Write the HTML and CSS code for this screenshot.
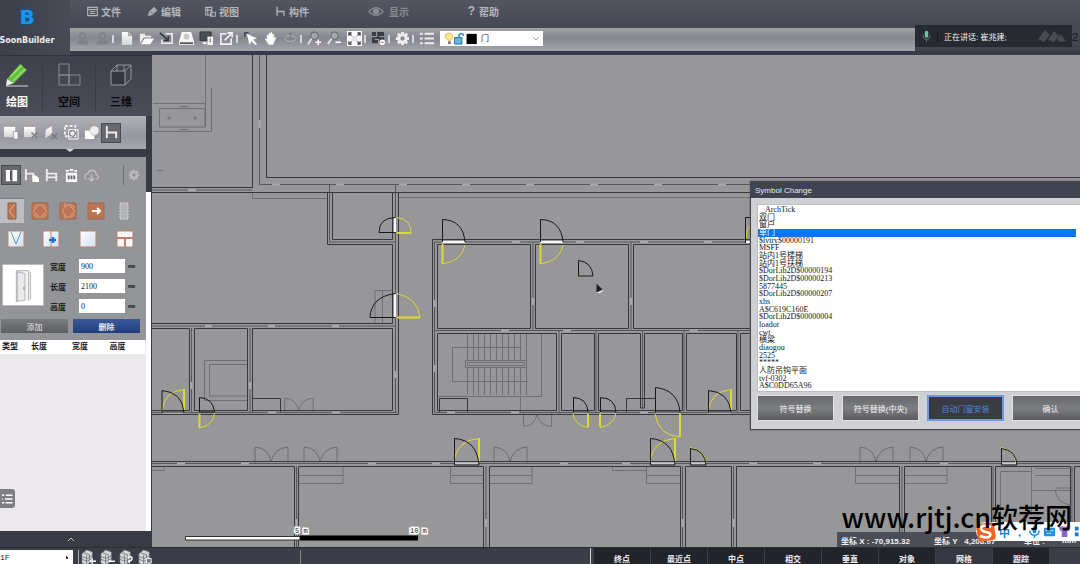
FILE: index.html
```html
<!DOCTYPE html>
<html lang="zh-CN">
<head>
<meta charset="utf-8">
<title>SoonBuilder</title>
<link rel="stylesheet" href="styles.css">
</head>
<body>
<svg class="defs" aria-hidden="true">
  <defs>
    <linearGradient id="metal" x1="0" y1="0" x2="0" y2="1"><stop offset="0" stop-color="#fff"/><stop offset="1" stop-color="#d2d3d7"/></linearGradient>
    <linearGradient id="glass" x1="0" y1="0" x2="1" y2="1"><stop offset="0" stop-color="#fff"/><stop offset="1" stop-color="#cfe0f2"/></linearGradient>
    <symbol id="layers" viewBox="0 0 16 16"><path d="M1 4l5-4 6 2v10l-6 4-5-2z" fill="#d6d7da" stroke="#77797f" stroke-width=".6"/><path d="M1 7l6 2 5-3M1 10l6 2 5-3M6 5v10M3 3l6 2v9" fill="none" stroke="#6a6c73" stroke-width=".8"/></symbol>
    <symbol id="gear" viewBox="0 0 16 16"><path d="M8 1v14M1 8h14M3 3l10 10M13 3L3 13" stroke="currentColor" stroke-width="3"/><circle cx="8" cy="8" r="4" fill="none" stroke="currentColor" stroke-width="3"/><circle cx="8" cy="8" r="2.3" fill="#8c8d93"/></symbol>
    <symbol id="chair" viewBox="0 0 16 16"><path d="M3 1v13M3 8h10v6" fill="none" stroke="currentColor" stroke-width="2"/></symbol>
    <symbol id="double-door" viewBox="0 0 35 17"><path d="M1 17V1Q15 2 17 16Q20 2 34 1V17" fill="none" stroke="#6c6c70"/></symbol>
  </defs>
</svg>
<header class="header">
  <div class="brand"><span class="brand-mark">B</span><span class="brand-name">SoonBuilder</span></div>
  <div class="header-main">
    <nav class="menu">
      <button><svg viewBox="0 0 16 16"><path d="M1 2h14v12H1zM1 5h14M4 8h8M4 11h8" fill="none" stroke="currentColor" stroke-width="1.6"/></svg>文件</button>
      <button><svg viewBox="0 0 16 16"><path d="M1 15l2-7 7-7 5 5-7 7z" fill="#a6a9b0"/><path d="M5 8l4 4" stroke="#50535d"/></svg>编辑</button>
      <button><svg viewBox="0 0 16 16"><path d="M1 2h9v11H1zM4 2v11M1 6h9M8 9h7v6H8z" fill="none" stroke="currentColor" stroke-width="1.5"/></svg>视图</button>
      <button><svg viewBox="0 0 16 16"><use href="#chair"/></svg>构件</button>
      <button class="dim"><svg class="eye" viewBox="0 0 20 14"><path d="M1 7Q10-3 19 7Q10 17 1 7z" fill="none" stroke="currentColor" stroke-width="1.5"/><circle cx="10" cy="7" r="4" fill="currentColor"/></svg>显示</button>
      <button><span class="question">?</span>帮助</button>
    </nav>
    <div class="toolbar-row">
      <div class="toolbar">
        <button aria-label="撤销"><svg class="faded" viewBox="0 0 16 16"><circle cx="8" cy="5" r="3" fill="none" stroke="currentColor" stroke-width="2"/><path d="M2 14q0-5 6-5t6 5z" fill="currentColor"/></svg></button>
        <button aria-label="重做"><svg class="faded" viewBox="0 0 16 16"><circle cx="8" cy="5" r="3" fill="none" stroke="currentColor" stroke-width="2"/><path d="M2 14q0-5 6-5t6 5z" fill="currentColor"/></svg></button>
        <i></i>
        <button aria-label="新建"><svg viewBox="0 0 16 16"><path d="M3 1h7l4 4v10H3z" fill="url(#metal)"/><path d="M10 1v4h4" fill="#bbb" stroke="#888" stroke-width=".6"/></svg></button>
        <button aria-label="打开"><svg viewBox="0 0 16 16"><path d="M1 13V3h5l1 2h6v2H5z" fill="#ececee"/><path d="M2 14l4-6h10l-4 6z" fill="#fff"/></svg></button>
        <button aria-label="导入"><svg viewBox="0 0 16 16"><path d="M7 3h7v10H3V9" fill="none" stroke="#f0f0f2" stroke-width="1.6"/><path d="M1 2l9 8M10 5v5H5" fill="none" stroke="#33353c" stroke-width="1.6"/></svg></button>
        <button aria-label="保存"><svg viewBox="0 0 16 16"><path d="M3 1h10l3 10v4H0v-4z" fill="#f5f5f6"/><circle cx="8" cy="6" r="3" fill="#c6c7cb"/><path d="M1 12h14v2H1z" fill="#55575e"/></svg></button>
        <button aria-label="另存"><svg viewBox="0 0 16 16"><path d="M1 1h12v9H1z" fill="#4b4d54" stroke="#36383f"/><path d="M4 13h4" stroke="#fff" stroke-width="2"/><path d="M9 6h6v9H9z" fill="#f3f3f4"/><path d="M12 8v4" stroke="#555"/></svg></button>
        <button aria-label="导出"><svg viewBox="0 0 16 16"><path d="M8 3H2v11h11V8" fill="none" stroke="#f4f4f6" stroke-width="1.7"/><path d="M6 10l8-8M9 2h5v5" fill="none" stroke="#f4f4f6" stroke-width="1.7"/></svg></button>
        <i></i>
        <button aria-label="选择"><svg viewBox="0 0 16 16"><path d="M4 3l11 5-4 1 4 5-2 1-4-4-2 4z" fill="#fff"/><path d="M2 6V2h4" fill="none" stroke="#3a3c43" stroke-width="1.5"/></svg></button>
        <button aria-label="平移"><svg viewBox="0 0 16 16"><path d="M4 8V4q1-1 2 0V2q1-1 2 0V1q1-1 2 1v1q2-1 2 1v3l1-1q2 0 1 2l-3 7H6L2 9q0-2 2-1z" fill="#fbfbfb" stroke="#888a91" stroke-width=".5"/></svg></button>
        <button aria-label="旋转视图"><svg class="faded" viewBox="0 0 16 16"><ellipse cx="8" cy="8" rx="6" ry="3" fill="none" stroke="#b5b6bb"/><path d="M8 2v8M6 4l2-2 2 2" fill="none" stroke="#77797f"/></svg></button>
        <i></i>
        <button aria-label="放大"><svg viewBox="0 0 16 16"><circle cx="8" cy="5" r="4" fill="#a5a6ab" stroke="#5e6067"/><path d="M5 8l-4 6" stroke="#dedfe1" stroke-width="2"/><path d="M9 12h6M12 9v6" stroke="#fff" stroke-width="1.6"/></svg></button>
        <button aria-label="缩小"><svg viewBox="0 0 16 16"><circle cx="8" cy="5" r="4" fill="#a5a6ab" stroke="#5e6067"/><path d="M5 8l-4 6" stroke="#dedfe1" stroke-width="2"/><path d="M9 12h6" stroke="#fff" stroke-width="1.6"/></svg></button>
        <button aria-label="全屏"><svg viewBox="0 0 16 16"><path d="M0 0h16v16H0z" fill="#fafafa"/><path d="M2 5V2h3M11 2h3v3M14 11v3h-3M5 14H2v-3M2 2l3 3M14 2l-3 3M14 14l-3-3M2 14l3-3" fill="none" stroke="#3e4047" stroke-width="1.2"/><path d="M5 5h6v6H5z" fill="#e1e2e4"/></svg></button>
        <i></i>
        <button aria-label="网格"><svg viewBox="0 0 16 16"><path d="M1 1h13v12H1z" fill="#3b3d45"/><path d="M6 1v5H1M9 6h5M8 13V9H4" fill="none" stroke="#aaabb0"/><circle cx="12" cy="12" r="3" fill="#fff"/><path d="M10 12h4" stroke="#888"/></svg></button>
        <i></i>
        <button aria-label="设置"><svg class="light" viewBox="0 0 16 16"><use href="#gear"/></svg></button>
        <i></i>
        <button aria-label="列表"><svg class="light" viewBox="0 0 16 16"><path d="M1 3h3M6 3h10M1 8h3M6 8h10M1 13h3M6 13h10" stroke="currentColor" stroke-width="2.2"/></svg></button>
        <div class="layer">
          <svg viewBox="0 0 36 14" aria-hidden="true"><path d="M5 1q4 0 4 4 0 2-2 4H4Q1 7 1 5q0-4 4-4" fill="#ffe88b" stroke="#c7a54c" stroke-width=".7"/><path d="M4 10h3v3H4z" fill="#767676"/><path d="M11 6h8v7h-8z" fill="#66b7df" stroke="#236c97"/><path d="M16 6V3q3-3 5 1" fill="none" stroke="#4b94bb" stroke-width="2"/><path d="M24 2h11v11H24z" fill="#000"/></svg>
          <select aria-label="图层"><option>门</option></select>
          <svg class="chevron" viewBox="0 0 8 8" aria-hidden="true"><path d="M1 2l3 3 3-3" fill="none" stroke="#a8a9ac"/></svg>
        </div>
      </div>
      <div class="speaker">
        <svg class="mic" viewBox="0 0 10 14"><rect x="3" y="1" width="4" height="8" rx="2" fill="#67c99b"/><path d="M1 6q0 5 4 5t4-5M5 11v3" fill="none" stroke="#5d7f77"/></svg>
        <span>正在讲话: 崔兆建;</span>
        <svg class="peaks" viewBox="0 0 30 14"><path d="M1 10L8 1l5 5-6 7zM11 11l6-9 5 5-5 6zM20 11l3-6 6 7-5 1z" fill="#484b52"/></svg>
      </div>
      <span class="clock">2</span>
    </div>
  </div>
</header>
<main class="workspace">
  <aside class="sidebar">
    <div class="modes">
      <button class="current"><svg viewBox="0 0 24 24"><path d="M1 23h22" stroke="#d5d6d9"/><path d="M2 16L15 1l7 6L9 20z" fill="#62c23c"/><path d="M5 14L17 2M8 18L20 6" stroke="#a1e07c" stroke-width="1.3"/><path d="M2 16l7 4-8 3z" fill="#ecefe8"/></svg>绘图</button>
      <button><svg viewBox="0 0 24 24"><path d="M2 1h10v11H2zM2 12h10v10H2zM12 12h11v10H12z" fill="none" stroke="#888a91"/></svg>空间</button>
      <button><svg viewBox="0 0 24 24"><path d="M2 8h14v14H2zM2 8l6-6h14l-6 6M22 2v14l-6 6M8 2v6M15 2v6" fill="none" stroke="#93959b"/><path d="M3 9h12v12H3z" fill="#34363f"/></svg>三维</button>
    </div>
    <div class="subtools">
      <button aria-label="墙"><svg viewBox="0 0 16 16"><path d="M0 2h12v11H0z" fill="url(#metal)"/><path d="M10 7h5v8h-5z" fill="#f8f8f8" stroke="#777" stroke-width=".6"/></svg></button>
      <button aria-label="板"><svg viewBox="0 0 16 16"><path d="M0 2h12v11H0z" fill="url(#metal)"/><path d="M8 8l6 6M14 8l-6 6" stroke="#77787e" stroke-width="1.5"/></svg></button>
      <button aria-label="柱"><svg viewBox="0 0 16 16"><path d="M1 14L2 5l6-4 1 8z" fill="url(#metal)"/><path d="M8 9l6 6M14 9l-6 6" stroke="#77787e" stroke-width="1.5"/></svg></button>
      <button aria-label="区域"><svg viewBox="0 0 16 16"><path d="M1 1h11v11H1z" fill="none" stroke="#eee" stroke-width="2" stroke-dasharray="3 2"/><path d="M5 5h10v10H5z" fill="none" stroke="#fff"/><circle cx="9" cy="9" r="3" fill="#eee" stroke="#666"/></svg></button>
      <button aria-label="布尔"><svg viewBox="0 0 16 16"><path d="M1 6h10v9H1z" fill="#fff"/><circle cx="11" cy="6" r="5" fill="#ededf0" stroke="#aaa" stroke-width=".6"/></svg></button>
      <button class="active" aria-label="构件"><svg class="light" viewBox="0 0 16 16"><use href="#chair"/></svg></button>
    </div>
    <div class="notch"></div>
    <div class="sidebar-body">
      <div class="properties">
        <div class="kinds">
          <button class="active" aria-label="门窗"><svg viewBox="0 0 16 16"><path d="M2 2h5v12H2zM9 2h5v12H9z" fill="#fff"/><path d="M7 3v10" stroke="#333"/></svg></button>
          <button aria-label="家具"><svg class="light" viewBox="0 0 16 16"><path d="M2 1v12M2 6h8v5" fill="none" stroke="currentColor" stroke-width="2"/><path d="M9 8h4l3 3v4H9z" fill="#fff"/></svg></button>
          <button aria-label="座椅"><svg class="light" viewBox="0 0 16 16"><path d="M3 1v13M3 6h10v8M3 10h10" fill="none" stroke="currentColor" stroke-width="2"/></svg></button>
          <button aria-label="设备"><svg viewBox="0 0 16 16"><path d="M2 5h12v10H2z" fill="#f8f8f8"/><path d="M2 3h3M6 2h4M11 3h3" stroke="#fff" stroke-width="2"/><path d="M4 8h2v4H4zM7 8h2v4H7zM10 8h2v4h-2z" fill="#66686e"/></svg></button>
          <button aria-label="云端"><svg viewBox="0 0 16 16"><path d="M3 12q-3-1-2-4 1-2 3-2 2-5 7-3 2 1 2 4 3 1 2 4l-2 1M8 7v7M5 11l3 3 3-3" fill="none" stroke="#c0c1c5" stroke-width="1.4"/></svg></button>
          <button class="options" aria-label="选项"><svg class="pale" viewBox="0 0 16 16"><use href="#gear"/></svg></button>
        </div>
        <div class="doors">
          <button class="active" aria-label="单开门"><svg viewBox="0 0 18 18"><path d="M5 1h8v16H5z" fill="#bd7452" stroke="#8f5d48"/><path d="M12 2L6 9l6 7" fill="none" stroke="#e3b08e"/></svg></button>
          <button aria-label="双开门"><svg viewBox="0 0 18 18"><path d="M1 1h16v16H1z" fill="#bd7452" stroke="#9f674c"/><path d="M9 2L2 9l7 7 7-7zM2 6l5-4M11 2l5 4M2 12l5 4M11 16l5-4" fill="none" stroke="#dda685"/></svg></button>
          <button aria-label="子母门"><svg viewBox="0 0 18 18"><path d="M1 1h16v16H1z" fill="#bd7452" stroke="#9f674c"/><path d="M9 2L3 9l6 7 7-7zM6 1v4M6 13v4M11 2l5 4M11 16l5-4" fill="none" stroke="#dda685"/></svg></button>
          <button aria-label="推拉门"><svg viewBox="0 0 18 18"><path d="M1 1h16v16H1z" fill="#bd7452" stroke="#9f674c"/><path d="M5 9h8M10 6l3 3-3 3" fill="none" stroke="#fff" stroke-width="2"/></svg></button>
          <button aria-label="洞口"><svg viewBox="0 0 18 18"><path d="M5 1h8v16H5z" fill="#b3b4b7" stroke="#dedee0" stroke-dasharray="2 1"/></svg></button>
        </div>
        <div class="windows">
          <button aria-label="平开窗"><svg viewBox="0 0 18 18"><path d="M1 1h16v16H1z" fill="url(#glass)" stroke="#b98268"/><path d="M4 2l5 12 5-12" fill="none" stroke="#6891b8"/></svg></button>
          <button aria-label="推拉窗"><svg viewBox="0 0 18 18"><path d="M1 1h16v16H1z" fill="url(#glass)" stroke="#b98268"/><path d="M9 1v16" stroke="#b98268"/><path d="M7 10h7M11 7v6" stroke="#1974d1" stroke-width="2.4"/></svg></button>
          <button aria-label="固定窗"><svg viewBox="0 0 18 18"><path d="M1 1h16v16H1z" fill="url(#glass)" stroke="#b98268"/></svg></button>
          <button aria-label="组合窗"><svg viewBox="0 0 18 18"><path d="M1 1h16v16H1z" fill="#f5f7fa" stroke="#b98268"/><path d="M1 8h16M9 8v9" stroke="#b98268" stroke-width="2"/></svg></button>
        </div>
        <div class="form">
          <div class="preview"><svg viewBox="0 0 42 42"><path d="M14 39V6h13v31" fill="#f3f3f4" stroke="#aaa"/><path d="M15 7l8 2v28l-8 1z" fill="#e9e9eb" stroke="#b3b3b7"/><path d="M27 6v31M29 7v29" stroke="#bbb"/><path d="M22 23v3" stroke="#777"/></svg></div>
          <div class="fields">
            <label for="w">宽度</label><input id="w" value="900"><span>mm</span>
            <label for="l">长度</label><input id="l" value="2100"><span>mm</span>
            <label for="h">高度</label><input id="h" value="0"><span>mm</span>
          </div>
        </div>
        <div class="actions"><button>添加</button><button class="primary">删除</button></div>
      </div>
      <div class="table-area">
        <table><thead><tr><th>类型</th><th>长度</th><th>宽度</th><th>高度</th></tr></thead></table>
        <button class="drawer" aria-label="目录"><svg viewBox="0 0 16 16"><path d="M0 3h3M5 3h9M0 8h1M4 8h10M0 13h3M5 13h9" stroke="#fff" stroke-width="1.8"/></svg></button>
      </div>
      <div class="scroll"></div>
    </div>
    <button class="collapse" aria-label="收起"><svg viewBox="0 0 8 6"><path d="M1 5l3-3 3 3" fill="none" stroke="#c4c5c9"/></svg></button>
  </aside>
  <section class="canvas">
    <svg class="plan" viewBox="152 55 928 492" preserveAspectRatio="xMinYMin slice">
      <g class="thin">
        <path d="M205.5 55V127M153 103.5H205.5M159.500 108.500H205V127H159.500zM153 131.500H211.500V88M157 170.500h6M180 106.500h8M180 129.500h8"/>
        <path d="M167 118h4M193 118h4M169 116v4M195 116v4"/>
        <path d="M252.500 192V198.500H327M398 197.500H1080"/>
        <path d="M247 360.500H204.500V400.500H247M247 364.500H209.500V396H247M375 323V290.500H392M382.500 290V323"/>
        <path d="M467.500 333V361M473.500 333V361M478.500 333V361M484.500 333V361M490.500 333V361M496.500 333V361M502.500 333V361M508.500 333V361M514.500 333V361M520.500 333V361M526.500 333V361M467.500 368V395M473.500 368V395M478.500 368V395M484.500 368V395M490.500 368V395M496.500 368V395M502.500 368V395M508.500 368V395M514.500 368V395M520.500 368V395M526.500 333V395"/>
        <path d="M522 347.500H452.500V381.500H528M541.500 333V396.500H437M520.500 396V412M465.500 360.500h61v7h-61zM467.500 362.500h57v3h-57z"/>
        <path d="M152 470.500h12v-4M299 475.500h44M299 483.500h44V466M483 475.500H450.500M483 483.500H450.500V466M489 475.500h43M489 483.500h43V466M612.500 466v4.500H646M680 475.500H646.500M680 483.500H646.500V466M899 475.500H855.500M899 483.500H855.500V466M905 475.500h42M905 483.500h42V466"/>
        <path d="M1000.500 547V471.500h30M1031.500 466V515M1035 468.500h35M1035 475.500h35M1031 490.500h39M1055.500 488h17M1055 490Q1057 503 1070 505"/>
        <path d="M523.500 412V426.500Q535 426 537 414Q539 426 551.500 426.500V412"/>
      </g>
      <use href="#double-door" x="284" y="397" width="30" height="15"/>
      <use href="#double-door" x="254" y="446" width="35" height="17"/>
      <use href="#double-door" x="303" y="446" width="35" height="17"/>
      <use href="#double-door" x="493" y="446" width="35" height="17"/>
      <use href="#double-door" x="859" y="446" width="35" height="17"/>
      <use href="#double-door" x="909" y="446" width="35" height="17"/>
      <g class="core">
        <path d="M259.500 55V184.500H1080M152 190H252M329.500 185V242H395M395.500 185V412M152 326H395M191.500 328V412M250 328V412M152 412.500H397M434.500 412V242H750M533 242V330M631 242V330M434 330.500H750M559 331V412M596 331V412M642.500 331V408M684 331V412M738 331V412M434 412.500H750M152 463.500H1080M296.500 466V547M486 466V547M682.500 466V547M733.500 466V547M902 466V547M993 466V547M1072 466V547"/>
      </g>
      <g class="gaps">
        <path d="M259.500 120v8M188 190h8M272 184.500h8M336 184.500h8M399 184.500h8M462 184.500h8M526 184.500h8M590 184.500h8M654 184.500h8M718 184.500h8M205 326h7M268 326h7M332 326h7M191.500 382v7M250 382v7M395.500 371v7M434.500 300v7M434.500 365v7M512 242h8M576 242h8M640 242h8M704 242h8M533 298v7M631 298v7M501 330.500h8M563 330.500h8M690 330.500h8M268 412.500h8M332 412.500h8M447 412.500h8M511 412.500h8M640 412.500h8M177 463.500h8M241 463.500h8M368 463.500h8M432 463.500h8M560 463.500h8M622 463.500h8M749 463.500h8M813 463.500h8M940 463.500h8M296.500 519v8M486 519v8M682.500 519v8M733.500 519v8"/>
      </g>
      <g class="wall">
        <path d="M252.500 55V188M266.500 55V177.500H1080M152 187.500H252M152 192.500H327.500V244.500H392.500V323.500H152M332.500 192.500H392.500V239.500H332.500zM398 192.500H1080M327 192.500H398"/>
        <path d="M398.500 192V414.500H152M392.500 328.500V410.500H252.500V328.500zM247.500 328.500H194.500V410.500H247.500zM189.500 410.500V328.500H152M189.500 410.500H152"/>
        <path d="M760 239.500H432.500V414.500H760M437.500 244.500H530.500V328.500H437.500zM535.500 244.500H628.500V328.500H535.500zM760 244.500H633.500V328.500H760"/>
        <path d="M437.500 333.500H556.500V410.500H437.500zM561.500 333.500H594.500V410.500H561.500zM598.500 333.500H640.500V408H644.500V333.500H682.500V410.500H598.500zM686.500 333.500H736.500V410.500H686.500zM760 333.500H740.500V410.500H760"/>
        <path d="M152 461.500H1080M152 466.500H294.500V547M298.500 547V466.500H483.500V547M489.500 547V466.500H680.500V547M685.500 547V466.500H731.500V547M736.500 547V466.500H899.500V547M904.500 547V466.500H991.500V547M995.500 547V466.500H1070.500V547M1074.500 547V466.500H1080"/>
        <path d="M252.500 412V398.500H280.500V412M439.500 412V398.500H467.500V412M626.500 412V398.500H655"/>
      </g>
      <g class="white">
        <path d="M395 218V232M395 294V317M442 242H465M540 242H563M745 242h6"/>
        <path class="sill" d="M455 463.500H479M650 463.500H675M163 412.500H183M600 412.500h15M574 412.500h14M656 412.500h24M709 412.500h22M691 463.500h15M1002 463.500h15"/>
      </g>
      <g class="yellow">
        <path d="M397 217.500Q411 219 411 233M397 293.500Q418 298 420 317.500M442.500 264Q462 261 465 245M540.500 264Q560 261 563 245M162 411Q164 391 184 389.500M199 428Q213 426 214.500 413M588 427.500Q574 425 573 413M600 427.500Q614 425 616 413M680 437Q659 436 655 414M708 411Q711 391 731 389.500M454 461Q457 440 479 438.500M650 461Q653 440 675 438.500M690 447.500q15 3 16 15M1001 447.500q14 3 15 15M746 238q1-12 5-13"/>
        <path class="leaf" d="M397 233H411M397 317.500H420M442.500 244V264M540.500 244V264M184 389V410M199.500 414V428M588 414V427M600 414V427M680 414V437M731 389V410M479 438V461M675 438V461"/>
      </g>
      <g class="door">
        <path d="M395 217.500Q379 218 379 232.500H395M395 293.500Q371 297 370 317.500H395M442.500 242V219.500Q463 220 465 242M540.500 242V219.500Q561 220 563 242M578.500 276V260.500Q592 262 593 276zM162 412V390.500Q182 392 184 412zM199.500 412V397.500Q213 398 214.500 412zM573.500 412V397.500Q587 398 588 412zM600.500 412V397.500Q615 398 616 412zM655.500 412V387.500Q678 390 680 412zM708.500 412V390.500Q729 392 731 412zM454.500 465V438.500Q477 440 479 465zM650.500 465V438.500Q673 440 675 465zM690.500 465V448.500Q705 450 706 465zM1001.500 465V448.500Q1016 450 1017 465zM745.500 243V217.500H751"/>
      </g>
      <path d="M596.500 283.500v9l6-3z" fill="#202126"/><path d="M596 293l7-3v1l-3 2z" fill="#e8e8ea"/>
      <path d="M185.500 536.500H300V540H185.500z" fill="#fff" stroke="#333"/>
      <path d="M300 535.500H418V540.500H300z" fill="#000"/>
      <g class="scale-text"><text x="295" y="533">5 m</text><text x="410" y="533">10 m</text></g>
    </svg>
    <div class="dialog" role="dialog" aria-label="Symbol Change">
      <h2>Symbol Change</h2>
      <div class="dialog-body">
        <ul>
          <li>&nbsp;_ArchTick</li><li>双门</li><li>窗户</li><li class="selected">单门</li><li>$lvtry$00000191</li><li>MSFF</li><li>站内1号楼梯</li><li>站内1号扶梯</li><li>$DorLib2D$00000194</li><li>$DorLib2D$00000213</li><li>5877445</li><li>$DorLib2D$00000207</li><li>xhs</li><li>A$C619C160E</li><li>$DorLib2D$00000004</li><li>loador</li><li>cwt</li><li>横梁</li><li>diaogou</li><li>2525</li><li>*****</li><li>人防吊钩平面</li><li>tvf-0302</li><li>A$C0DD65A96</li>
        </ul>
        <div class="dialog-actions"><button>符号替换</button><button>符号替换(中央)</button><button class="focused">自动门窗安装</button><button>确认</button></div>
      </div>
    </div>
    <div class="coordinates"><span>坐标 X : -70,915.32</span><span>坐标 Y&nbsp;&nbsp; 4,208.67</span><span>单位 :</span><span>mm</span></div>
    <div class="ime">
      <svg class="sogou" viewBox="0 0 20 20"><rect x="1" y="1" width="18" height="18" rx="4" fill="#f26522" transform="rotate(-8 10 10)"/><path d="M15 5Q6 2 5 6q0 3 5 4 6 1 4 4-2 3-10 0" fill="none" stroke="#fff" stroke-width="2.5"/></svg>
      <b>中</b><b>,</b>
      <svg viewBox="0 0 14 14"><rect x="5" y="1" width="4" height="8" rx="2" fill="#1687df"/><path d="M2 6q0 5 5 5t5-5M7 11v3" fill="none" stroke="#1687df" stroke-width="1.5"/></svg>
      <svg viewBox="0 0 14 14"><rect x="1" y="3" width="12" height="9" rx="1" fill="#2390e5"/><path d="M3 6h8M4 9h6" stroke="#fff" stroke-dasharray="2 1"/></svg>
      <svg viewBox="0 0 14 14"><path d="M1 3l4-2q2 2 4 0l4 2-2 4-1-1v7H4V6L3 7z" fill="#8267c9"/></svg>
      <svg viewBox="0 0 14 14"><path d="M2 2h4v4H2zM8 2h4v4H8zM2 8h4v4H2zM8 8h4v4H8z" fill="#1879d4"/></svg>
    </div>
    <div class="watermark">www.rjtj.cn软荐网</div>
  </section>
</main>
<footer class="footer">
  <select aria-label="楼层"><option>1F</option></select>
  <div class="floors">
    <button aria-label="添加楼层"><svg viewBox="0 0 16 16"><use href="#layers"/><path d="M9 12h7M12 9v6" stroke="#fff" stroke-width="1.500"/></svg></button>
    <button aria-label="删除楼层"><svg viewBox="0 0 16 16"><use href="#layers"/><path d="M9 12h7" stroke="#fff" stroke-width="1.500"/></svg></button>
    <button aria-label="查询楼层"><svg viewBox="0 0 16 16"><use href="#layers"/><path d="M9 8q5-2 5 1 0 2-3 3v2" fill="none" stroke="#fff" stroke-width="1.500"/></svg></button>
    <button aria-label="复制楼层"><svg viewBox="0 0 16 16"><use href="#layers"/><path d="M9 9h5v5H9z" fill="#777980" stroke="#fff"/></svg></button>
  </div>
  <div class="snaps"><button>终点</button><button>最近点</button><button>中点</button><button>相交</button><button>垂直</button><button>对象</button><button class="off">网格</button><button>跟踪</button></div>
</footer>
</body>
</html>
```
FILE: styles.css
```css
* { box-sizing: border-box; }
body {
  margin: 0;
  height: 100vh;
  display: flex;
  flex-direction: column;
  overflow: hidden;
  background: #3d404b;
  font-family: "Liberation Sans", "Noto Sans CJK SC", sans-serif;
  font-size: 8px;
  color: #16171b;
}
button, input, select { font: inherit; color: inherit; border: 0; padding: 0; margin: 0; background: none; border-radius: 0; appearance: none; }
button { display: flex; align-items: center; justify-content: center; white-space: nowrap; }
svg { display: block; flex: none; }
.defs { position: absolute; width: 0; height: 0; }
.light { color: #ededf0; }
.pale { color: #b8b9bc; }
.faded { color: #818289; }

.header { display: flex; height: 55px; flex: none; background: linear-gradient(#53565f 0, #464a55 24px, #41444f 50px, #363945 51px, #3a3d49); }
.brand { width: 70px; flex: none; display: flex; flex-direction: column; align-items: center; padding: 6px 16px 0 0; background: linear-gradient(90deg, #3b3f4a, #484b56); }
.brand-mark { font: bold 20px/22px "DejaVu Sans", sans-serif; color: #1d95ed; text-shadow: 0 0 5px #075aa8; }
.brand-name { font: bold 8px/12px "DejaVu Sans", sans-serif; color: #eeeef0; margin-top: 7px; }
.header-main { flex: 1; min-width: 0; }
.menu { height: 28px; padding: 0 0 6px 17px; display: grid; grid-template-columns: 60px 58px 70px 93px 99px 40px; }
.menu button { gap: 3px; justify-content: flex-start; font-size: 10px; font-weight: bold; color: #b4b6bc; }
.menu svg { width: 11px; height: 11px; }
.menu .eye { width: 16px; }
.menu .dim { color: #888b93; gap: 5px; }
.question { font-size: 12px; width: 9px; }
.toolbar-row { display: flex; height: 23px; }
.toolbar { flex: 1; display: flex; align-items: center; padding: 0 0 2px 2px; background: linear-gradient(#a1a2a8, #85868e 45%, #a5a6ad); }
.toolbar button { width: 20px; height: 20px; flex: none; }
.toolbar button svg { width: 15px; height: 15px; }
.toolbar i { width: 4px; height: 8px; border-left: 2px solid #d5d6d9; }
.layer { display: flex; align-items: center; width: 103px; height: 15px; margin-left: 4px; padding: 0 3px 0 4px; background: #fff; }
.layer > svg { width: 34px; height: 13px; }
.layer select { flex: 1; font-size: 8px; height: 15px; padding-left: 3px; }
.layer .chevron { width: 8px; height: 8px; }
.speaker { width: 157px; height: 22px; margin-top: -3px; display: flex; align-items: center; background: #272a31; color: #f2f2f3; padding: 0 5px 0 7px; }
.mic { width: 9px; height: 12px; }
.speaker span { font-size: 8px; flex: 1; margin-left: 6px; padding-left: 6px; border-left: 1px solid #17191e; }
.peaks { width: 30px; height: 14px; }
.clock { width: 8px; font-size: 11px; line-height: 18px; overflow: hidden; }

.workspace { flex: 1; min-height: 0; display: flex; }
.sidebar { width: 152px; flex: none; display: flex; flex-direction: column; background: #393b44; border-top: 1px solid #2f323c; }
.modes { height: 60px; flex: none; display: grid; grid-template-columns: 43px 53px 50px; align-items: center; background: linear-gradient(#3e414b, #4a4d57); }
.modes button { flex-direction: column; gap: 8px; font-size: 11px; line-height: 14px; font-weight: bold; height: 50px; color: #090a0d; border-right: 1px solid #393c45; }
.modes .current { color: #fff; padding-right: 8px; }
.modes button:last-child { border: 0; }
.modes svg { width: 24px; height: 24px; }
.subtools { width: 146px; height: 33px; flex: none; display: flex; align-items: center; padding-left: 1px; background: linear-gradient(#b1b2b8, #96979e 60%, #a7a8af); }
.subtools button { width: 20px; height: 20px; }
.subtools svg { width: 15px; height: 15px; }
.subtools .active, .kinds .active { background: #66686e; box-shadow: inset 0 0 0 1px #494b52; }
.notch { height: 8px; flex: none; }
.notch::before { content: ""; display: block; width: 0; margin-left: 66px; border: 4px solid transparent; border-top: 3px solid #d4d5d8; border-bottom: 0; }
.sidebar-body { flex: 1; min-height: 0; display: grid; grid-template-columns: 146px 5px; grid-template-rows: auto 1fr; }
.properties { padding-top: 8px; background: #949599; }
.kinds { display: flex; padding-left: 1px; height: 20px; }
.kinds button { width: 20px; height: 20px; }
.kinds svg { width: 15px; height: 15px; }
.kinds .options { margin-left: 22px; border-left: 1px solid #707177; }
.kinds .options svg { width: 12px; height: 12px; }
.doors { display: grid; grid-template-columns: 26px repeat(4, 28px); height: 25px; margin-top: 13px; }
.doors button { height: 25px; }
.doors .active { background: #bcbdc0; border-top: 1px solid #7d7e83; width: 24px; }
.doors svg, .windows svg { width: 18px; height: 18px; }
.windows { display: grid; grid-template-columns: 32px repeat(3, 37px); height: 26px; margin-top: 3px; }
.form { display: flex; gap: 6px; margin-top: 7px; padding-left: 2px; }
.preview { width: 42px; height: 42px; margin-top: 5px; background: #fff; border: 1px solid #b9babd; }
.preview svg { width: 40px; height: 40px; }
.fields { display: grid; grid-template-columns: 29px 46px 10px; grid-auto-rows: 14px; gap: 6px 0; align-items: center; font-weight: bold; }
.fields input { width: 46px; height: 14px; background: #fff; padding: 0 2px; font: 8px "Liberation Serif", serif; }
.fields span { font: bold 6px "Liberation Mono", monospace; padding-left: 3px; }
.actions { display: grid; grid-template-columns: 67px 67px; gap: 5px; padding: 6px 0 7px 1px; }
.actions button { height: 14px; color: #e9e9eb; background: linear-gradient(#7b7c80, #5d5e62); }
.actions .primary { background: linear-gradient(#3c5a9a, #203d7d); font-weight: bold; }
.scroll { grid-column: 2; grid-row: 1 / 3; margin-top: 35px; background: #fff; }
.table-area { grid-column: 1; background: #ebe9ec; }
.table-area table { width: 145px; border-collapse: collapse; background: #fff; table-layout: fixed; }
.table-area th { padding: 0 0 0 2px; height: 14px; text-align: left; font-size: 8px; line-height: 12px; font-weight: bold; white-space: nowrap; }
.table-area th:first-child { width: 29px; }
.table-area th:nth-child(2) { width: 41px; }
.drawer { width: 15px; height: 19px; margin-top: 135px; background: #7e7f83; border-radius: 0 3px 3px 0; }
.drawer svg { width: 14px; height: 12px; }
.collapse { height: 16px; flex: none; width: 142px; }
.collapse svg { width: 8px; height: 6px; }

.canvas { flex: 1; position: relative; overflow: hidden; background: #979799; }
.plan { width: 100%; height: 100%; }
.plan g { fill: none; stroke-width: 1; }
.plan .thin { stroke: #707074; }
.plan .wall { stroke: #37373c; }
.plan .core { stroke: #57575c; }
.plan .gaps { stroke: #a9a9ac; stroke-width: 2; }
.plan .white { stroke: #f7f7f7; stroke-width: 2; }
.plan .sill { stroke: #c9c9cb; stroke-width: 2; }
.plan .yellow { stroke: #dadc2c; stroke-width: 1; }
.plan .leaf { stroke-width: 2; }
.plan .door { stroke: #18181b; }
.plan .scale-text { fill: #222; stroke: #fff; stroke-width: 3; paint-order: stroke; font: 7px "Liberation Mono", monospace; }
.dialog { position: absolute; left: 598px; top: 126px; width: 346px; background: #cfd0d4; border: 1px solid #46474c; box-shadow: 0 0 2px #666; }
.dialog h2 { margin: 0; height: 16px; padding-left: 4px; font: 8px/18px "Liberation Sans", sans-serif; color: #e9e9ed; background: #404352; }
.dialog-body { padding: 6px 6px 8px; }
.dialog ul { margin: 0; padding: 1px 12px 1px 0; height: 188px; list-style: none; background: #fff; border: 1px solid #bcbdc1; display: grid; grid-template-rows: repeat(24, 1fr); font: 8px/8px "Liberation Serif", "Noto Sans CJK SC", serif; }
.dialog li { min-height: 0; padding-left: 1px; }
.dialog .selected { background: #0877e7; color: #fff; }
.dialog-actions { display: grid; grid-template-columns: repeat(4, 77px); gap: 8px; margin-top: 3px; }
.dialog-actions button { height: 26px; color: #f3f3f4; background: linear-gradient(#66676b, #7d7e82 50%, #5b5c60); border: 1px solid #e1e1e3; }
.dialog-actions .focused { color: #5087df; background: #393b40; border: 2px solid #6e96e5; }
.coordinates { position: absolute; right: 0; bottom: 0; width: 243px; height: 15px; display: grid; grid-template-columns: 93px 90px 38px 18px; padding: 2px 0 0 4px; align-items: center; background: #4c4e57; color: #f3f3f4; font: bold 8px "Liberation Sans", "Noto Sans CJK SC", sans-serif; white-space: nowrap; }
.ime { position: absolute; right: -8px; bottom: 6px; width: 112px; height: 19px; display: flex; gap: 2px; align-items: center; background: #fff; border-radius: 10px 0 0 10px; color: #187ed8; }
.ime svg { width: 13px; height: 13px; }
.ime .sogou { width: 20px; height: 20px; }
.ime b { width: 13px; font-size: 11px; text-align: center; }
.watermark { position: absolute; right: 8px; bottom: 12px; font: 500 27px/36px "Noto Sans CJK SC", sans-serif; color: #000; white-space: nowrap; }

.footer { height: 17px; flex: none; display: flex; align-items: flex-start; background: #3b3d47; border-top: 1px solid #2b2d35; }
.footer select { width: 73px; height: 14px; margin-top: 2px; background: linear-gradient(45deg, #333 50%, transparent 0) 66px 6px / 3px 3px no-repeat #fff; font: 8px "Liberation Mono", monospace; }
.floors { display: flex; gap: 5px; margin: 2px 0 0 5px; padding-left: 2px; border-left: 1px solid #aaaab0; width: 223px; border-right: 1px solid #85878f; }
.floors button { width: 14px; height: 14px; }
.floors svg { width: 15px; height: 15px; }
.snaps { flex: 1; display: flex; margin-left: 289px; padding-left: 3px; border-left: 1px solid #d1d1d5; gap: 1px; }
.snaps button { width: 56px; height: 16px; padding-top: 4px; background: #22242c; color: #eeeef0; font-weight: bold; }
.snaps .off { background: #353741; }
```
